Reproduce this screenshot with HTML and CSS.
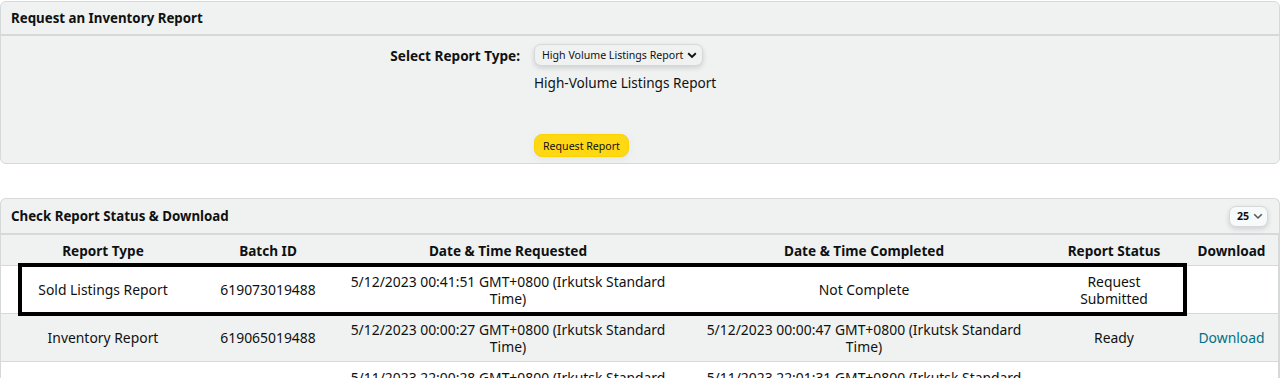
FILE: index.html
```html
<!DOCTYPE html>
<html lang="en">
<head>
    <meta charset="UTF-8">
    <meta name="viewport" content="width=device-width, initial-scale=1.0">
    <title>Inventory Reports</title>
    <link rel="stylesheet" href="styles.css">
</head>
<body>
    <!-- request a report -->
    <div class="panel request-panel">
        <div class="panel-head">
            <h2>Request an Inventory Report</h2>
        </div>
        <div class="request-body">
            <div class="field-row">
                <label class="field-label" for="report-type">Select Report Type:</label>
                <div class="field-value">
                    <button class="select-btn" id="report-type">High Volume Listings Report
                        <svg class="chev" width="10" height="7" viewBox="0 0 10 7"><path d="M1.2 1.3 L5 5 L8.8 1.3" fill="none" stroke="#0f1111" stroke-width="1.9"/></svg>
                    </button>
                    <p class="report-name">High-Volume Listings Report</p>
                    <button class="yellow-btn">Request Report</button>
                </div>
            </div>
        </div>
    </div>

    <!-- report status -->
    <div class="panel status-panel">
        <div class="panel-head">
            <h2>Check Report Status &amp; Download</h2>
            <button class="select-btn small">25
                <svg class="chev" width="10" height="7" viewBox="0 0 10 7"><path d="M1.2 1.3 L5 5 L8.8 1.3" fill="none" stroke="#565959" stroke-width="1.6"/></svg>
            </button>
        </div>
        <div class="table-wrap">
            <table class="report-table">
                <colgroup>
                    <col class="c-type">
                    <col class="c-batch">
                    <col class="c-req">
                    <col class="c-done">
                    <col class="c-status">
                    <col class="c-dl">
                </colgroup>
                <thead>
                    <tr>
                        <th>Report Type</th>
                        <th>Batch ID</th>
                        <th>Date &amp; Time Requested</th>
                        <th>Date &amp; Time Completed</th>
                        <th>Report Status</th>
                        <th>Download</th>
                    </tr>
                </thead>
                <tbody>
                    <tr>
                        <td>Sold Listings Report</td>
                        <td>619073019488</td>
                        <td>5/12/2023 00:41:51 GMT+0800 (Irkutsk Standard Time)</td>
                        <td>Not Complete</td>
                        <td>Request Submitted</td>
                        <td></td>
                    </tr>
                    <tr>
                        <td>Inventory Report</td>
                        <td>619065019488</td>
                        <td>5/12/2023 00:00:27 GMT+0800 (Irkutsk Standard Time)</td>
                        <td>5/12/2023 00:00:47 GMT+0800 (Irkutsk Standard Time)</td>
                        <td>Ready</td>
                        <td><a href="#">Download</a></td>
                    </tr>
                    <tr>
                        <td>Inventory Report</td>
                        <td>619061019488</td>
                        <td>5/11/2023 22:00:28 GMT+0800 (Irkutsk Standard Time)</td>
                        <td>5/11/2023 22:01:31 GMT+0800 (Irkutsk Standard Time)</td>
                        <td>Ready</td>
                        <td><a href="#">Download</a></td>
                    </tr>
                </tbody>
            </table>
            <!-- annotation box over the first row -->
            <div class="highlight"></div>
        </div>
    </div>
</body>
</html>
```

FILE: styles.css
```css
body {
    font-family: "Noto Sans", Arial, sans-serif;
    color: #0f1111;
    background-color: #ffffff;
    margin: 0;
    padding: 1px 0 0 0;
    font-size: 13.6px;
}
.panel {
    background-color: #f0f2f2;
    border: 1px solid #d5d9d9;
    border-radius: 6px;
    margin: 0 1px 0 0;
}
.panel-head {
    display: flex;
    align-items: center;
    justify-content: space-between;
    height: 32px;
    padding: 0 11px 0 10px;
    border-bottom: 2px solid #d5d9d9;
}
.status-panel .panel-head {
    height: 34px;
}
.panel-head h2 {
    margin: 0;
    font-size: 13.3px;
    font-weight: 700;
}
.request-panel {
    height: 161px;
}
.status-panel {
    margin-top: 34px;
    border-bottom: none;
    border-radius: 6px 6px 0 0;
    overflow: hidden;
}
.request-body {
    padding: 8px 0 0 0;
}
.field-row {
    display: flex;
    gap: 14px;
}
.field-label {
    width: 519px;
    text-align: right;
    font-weight: 700;
    padding-top: 2px;
}
.field-value {
    display: flex;
    flex-direction: column;
    align-items: flex-start;
}
.select-btn {
    display: flex;
    align-items: center;
    gap: 4px;
    font-family: inherit;
    font-size: 10.6px;
    color: #0f1111;
    background-color: #f0f2f2;
    border: 1px solid #d5d9d9;
    border-radius: 7px;
    box-shadow: 0 2px 5px rgba(15, 17, 17, 0.15);
    height: 22px;
    padding: 0 5px 0 7px;
    cursor: pointer;
}
.select-btn.small {
    height: 21px;
    padding: 0 4px 0 7px;
    font-weight: 700;
    background-color: #f7fafa;
}
.report-name {
    margin: 7px 0 0 0;
    font-size: 13.6px;
}
.yellow-btn {
    margin-top: 42px;
    font-family: inherit;
    font-size: 10.6px;
    color: #0f1111;
    background-color: #ffd814;
    border: 1px solid #fcd200;
    border-radius: 8px;
    height: 23px;
    padding: 0 8px;
    box-shadow: 0 2px 5px rgba(213, 217, 217, 0.5);
    cursor: pointer;
}
.table-wrap {
    position: relative;
}
.report-table {
    width: 100%;
    border-collapse: collapse;
    table-layout: fixed;
}
.c-type { width: 204px; }
.c-batch { width: 126px; }
.c-req { width: 354px; }
.c-done { width: 358px; }
.c-status { width: 142px; }
.report-table th,
.report-table td {
    text-align: center;
    padding: 0 12px;
    border-top: 1px solid #d5d9d9;
    font-size: 13.9px;
}
.report-table th {
    height: 30px;
    font-size: 13.6px;
    font-weight: 700;
    border-top: none;
}
.report-table td {
    height: 47px;
    line-height: 17px;
}
.report-table tbody tr:nth-child(odd) {
    background-color: #ffffff;
}
.report-table tbody tr:nth-child(even) {
    background-color: #f0f2f2;
}
.report-table tr td:last-child,
.report-table tr th:last-child {
    border-right: 1px solid #d5d9d9;
}
.report-table a {
    color: #007185;
    text-decoration: none;
}
.highlight {
    position: absolute;
    left: 17px;
    top: 28px;
    width: 1161px;
    height: 45px;
    border: 4px solid #000000;
}
```
